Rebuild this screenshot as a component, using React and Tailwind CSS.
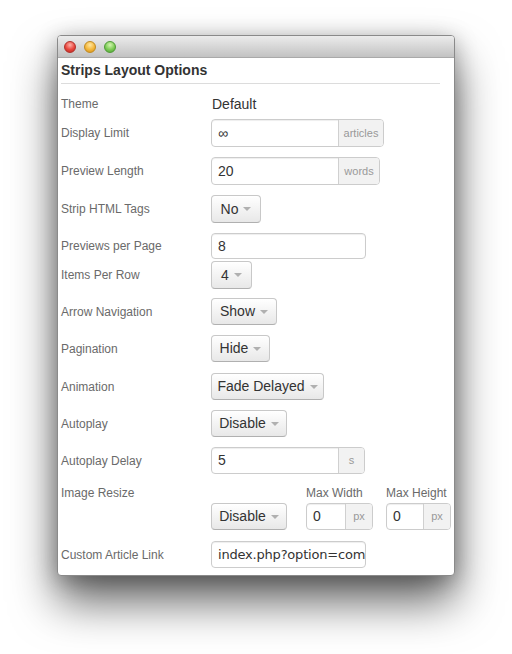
const Caret = () => (
  <span className="ml-[5px] inline-block h-0 w-0 border-x-[4px] border-t-[4px] border-x-transparent border-t-[#b0b0b0]" />
);

const Label = ({ children, className = '' }) => (
  <div className={`w-[150px] shrink-0 text-[12px] text-[#6a6a6a] ${className}`}>{children}</div>
);

const Dropdown = ({ text, width }) => (
  <div
    className={`${width} flex h-full items-center justify-center rounded-[4px] border border-[#c8c8c8] border-b-[#b0b0b0] bg-linear-to-b from-white to-[#e8e8e8] text-[14px] text-[#333] shadow-[inset_0_1px_0_rgba(255,255,255,0.8)]`}
  >
    {text}
    <Caret />
  </div>
);

const Input = ({ value, width, addon, addonWidth, mono }) => (
  <div className={`${width} flex h-full overflow-hidden rounded-[4px] border border-[#ccc] bg-white shadow-[inset_0_1px_1px_rgba(0,0,0,0.07)]`}>
    <div
      className={`flex min-w-0 flex-1 items-center overflow-hidden whitespace-nowrap pl-[6px] text-[#333] ${
        mono ? "font-['DejaVu_Sans'] text-[13px] tracking-[-0.2px]" : 'text-[14px]'
      }`}
    >
      {value}
    </div>
    {addon && (
      <div className={`${addonWidth} flex shrink-0 items-center justify-center border-l border-[#d0d0d0] bg-[#f2f2f2] text-[11px] text-[#999]`}>
        {addon}
      </div>
    )}
  </div>
);

const Row = ({ label, mt, h = 'h-[28px]', children }) => (
  <div className={`${mt} ${h} flex items-center`}>
    <Label>{label}</Label>
    {children}
  </div>
);

export default function App() {
  return (
    <div className="min-h-screen bg-white pl-[57px] pt-[35px] font-['Liberation_Sans',Arial,sans-serif]">
      <div className="w-[398px] overflow-hidden rounded-[4px] border border-[#8a8a8a] bg-white shadow-[0_26px_45px_rgba(0,0,0,0.6),0_4px_22px_rgba(0,0,0,0.28)]">
        {/* title bar */}
        <div className="flex h-[22px] items-center gap-[8px] border-b border-[#a9a9a9] bg-linear-to-b from-[#ececec] to-[#c2c2c2] pl-[6px]">
          <span className="h-[12px] w-[12px] rounded-full border border-[#b0302a] bg-[radial-gradient(circle_at_50%_30%,#ffb0a8,#e8453c_55%,#b82a22)]" />
          <span className="h-[12px] w-[12px] rounded-full border border-[#c08a20] bg-[radial-gradient(circle_at_50%_30%,#ffe7a0,#f4b63a_55%,#d08e18)]" />
          <span className="h-[12px] w-[12px] rounded-full border border-[#4f9a36] bg-[radial-gradient(circle_at_50%_30%,#d4f5b0,#7ccb55_55%,#4c9e34)]" />
        </div>

        <div className="pb-[7px] pl-[3px] pr-[14px]">
          <h1 className="flex h-[26px] items-center border-b border-[#dcdcdc] text-[14px] font-bold text-[#333]">
            Strips Layout Options
          </h1>

          <Row label="Theme" mt="mt-[9px]" h="h-[22px]">
            <span className="pl-px text-[14px] text-[#333]">Default</span>
          </Row>

          <Row label="Display Limit" mt="mt-[4px]">
            <Input value="∞" width="w-[173px]" addon="articles" addonWidth="w-[45px]" />
          </Row>

          <Row label="Preview Length" mt="mt-[10px]">
            <Input value="20" width="w-[169px]" addon="words" addonWidth="w-[41px]" />
          </Row>

          <Row label="Strip HTML Tags" mt="mt-[10px]">
            <Dropdown text="No" width="w-[50px]" />
          </Row>

          <Row label="Previews per Page" mt="mt-[10px]" h="h-[26px]">
            <Input value="8" width="w-[155px]" />
          </Row>

          <Row label="Items Per Row" mt="mt-[2px]">
            <Dropdown text="4" width="w-[41px]" />
          </Row>

          <Row label="Arrow Navigation" mt="mt-[9px]" h="h-[27px]">
            <Dropdown text="Show" width="w-[66px]" />
          </Row>

          <Row label="Pagination" mt="mt-[10px]" h="h-[27px]">
            <Dropdown text="Hide" width="w-[59px]" />
          </Row>

          <Row label="Animation" mt="mt-[11px]" h="h-[27px]">
            <Dropdown text="Fade Delayed" width="w-[113px]" />
          </Row>

          <Row label="Autoplay" mt="mt-[10px]" h="h-[27px]">
            <Dropdown text="Disable" width="w-[76px]" />
          </Row>

          <Row label="Autoplay Delay" mt="mt-[10px]" h="h-[27px]">
            <Input value="5" width="w-[154px]" addon="s" addonWidth="w-[26px]" />
          </Row>

          <div className="mt-[11px] flex">
            <Label className="flex h-[16px] items-center">Image Resize</Label>
            <div className="flex items-end">
              <div className="h-[27px]">
                <Dropdown text="Disable" width="w-[76px]" />
              </div>
              <div className="ml-[19px] flex flex-col">
                <span className="flex h-[16px] items-center text-[12px] text-[#6a6a6a]">Max Width</span>
                <div className="mt-[2px] h-[27px]">
                  <Input value="0" width="w-[67px]" addon="px" addonWidth="w-[27px]" />
                </div>
              </div>
              <div className="ml-[13px] flex flex-col">
                <span className="flex h-[16px] items-center text-[12px] text-[#6a6a6a]">Max Height</span>
                <div className="mt-[2px] h-[27px]">
                  <Input value="0" width="w-[65px]" addon="px" addonWidth="w-[27px]" />
                </div>
              </div>
            </div>
          </div>

          <Row label="Custom Article Link" mt="mt-[11px]" h="h-[27px]">
            <Input value="index.php?option=com" width="w-[155px]" mono />
          </Row>
        </div>
      </div>
    </div>
  );
}
